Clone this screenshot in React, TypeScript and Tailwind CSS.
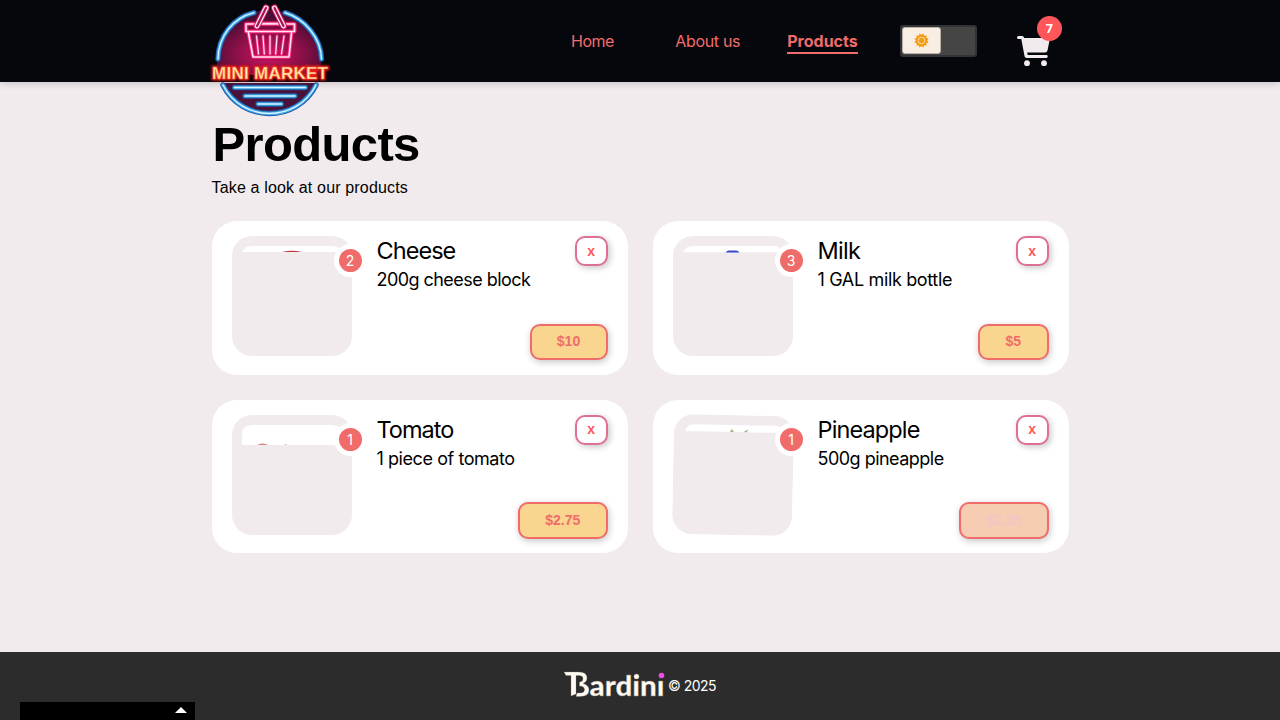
import type { ReactNode } from "react";

type Product = {
  name: string;
  detail: string;
  price: string;
  count: number;
  nameTracking: string;
  detailTracking: string;
  priceWidth: string;
  disabled?: boolean;
  thumb: ReactNode;
};

const products: Product[] = [
  {
    name: "Cheese",
    detail: "200g cheese block",
    price: "$10",
    count: 2,
    nameTracking: "tracking-[-0.950px]",
    detailTracking: "tracking-[-0.550px]",
    priceWidth: "w-[78px]",
    thumb: (
      <>
        <path d="M10 16Q13 10 20 10H100Q107 10 110 16Z" fill="#fff" />
        <path d="M50 16Q60 13.6 70 16Z" fill="#c4373f" />
      </>
    ),
  },
  {
    name: "Milk",
    detail: "1 GAL milk bottle",
    price: "$5",
    count: 3,
    nameTracking: "tracking-[-0.700px]",
    detailTracking: "tracking-[-0.350px]",
    priceWidth: "w-[70.500px]",
    thumb: (
      <>
        <path d="M10 16.3Q13 10 20 10H100Q107 10 110 16.3Z" fill="#fff" />
        <path d="M52.5 16.4Q54 14.6 56 14.6H63Q65 14.6 66.5 16.4Z" fill="#3347c4" />
      </>
    ),
  },
  {
    name: "Tomato",
    detail: "1 piece of tomato",
    price: "$2.75",
    count: 1,
    nameTracking: "tracking-[-1px]",
    detailTracking: "tracking-[-0.430px]",
    priceWidth: "w-[89.500px]",
    thumb: (
      <>
        <path d="M10 30V20Q10 10 20 10H100Q110 10 110 20V30Z" fill="#fff" />
        <path d="M25 30Q30.5 27 36 30Z" fill="#d5807a" />
        <path d="M52 30L53.5 29.3L55 30Z" fill="#d5807a" />
      </>
    ),
  },
  {
    name: "Pineapple",
    detail: "500g pineapple",
    price: "$3.25",
    count: 1,
    nameTracking: "tracking-[-0.880px]",
    detailTracking: "tracking-[-0.520px]",
    priceWidth: "w-[89.500px]",
    disabled: true,
    thumb: (
      <>
        <path d="M11 17Q13 10 20 10H100Q107 10 110 17Z" fill="#fff" />
        <path d="M56 17L57.5 14L60.5 17ZM69 17L74.5 14L73 17Z" fill="#aab792" />
      </>
    ),
  },
];

const slats = "M48 36L50 54M54.500 36L55.800 54M61.500 36V54M68.500 36L67.200 54M75.500 36L73 54";

function Logo() {
  return (
    <svg className="block h-[120px] w-[124px]" viewBox="0 0 124 120">
      <defs>
        <radialGradient id="disc" cx="50%" cy="68%" r="58%">
          <stop offset="0" stopColor="#d01464" />
          <stop offset="0.55" stopColor="#8b1048" />
          <stop offset="1" stopColor="#4a0c34" />
        </radialGradient>
        <filter id="glow" x="-20%" y="-40%" width="140%" height="180%">
          <feGaussianBlur stdDeviation="0.8" />
        </filter>
      </defs>
      <path d="M10 62A52 52 0 0 1 114 62L113 75H10Z" fill="url(#disc)" />
      <path d="M14 83H110A52 52 0 0 1 14 83Z" fill="#491239" />
      <g fill="none" strokeLinecap="round">
        {[
          { c: "#25569f", w: 5.4 },
          { c: "#3ca6eb", w: 3.5 },
          { c: "#d8f5ff", w: 1.3 },
        ].map((s) => (
          <g key={s.c} stroke={s.c} strokeWidth={s.w}>
            <path d="M11 59C11.500 36 26 18 47 12.700M78 12.700C98 19 114 38 114.500 59" />
            <path d="M16 85C35 123 90 123 109 85M27.500 87.500H98.500M38 96H88M51 104H74.500" />
          </g>
        ))}
        {[
          { c: "#a60b49", w: 5 },
          { c: "#f82b80", w: 3.6 },
          { c: "#ffe4ef", w: 1.6 },
        ].map((s) => (
          <g key={s.c} stroke={s.c} strokeWidth={s.w} strokeLinejoin="round">
            <path d="M41.500 33L46 57H82L84.500 33M39 24H87.500V31.500H39ZM56 23.500H71" />
          </g>
        ))}
        <g transform="translate(1.500)">
          <path d={slats} stroke="#f82b80" strokeWidth="2.800" />
          <path d={slats} stroke="#ffe4ef" strokeWidth="1.200" />
          <path d="M48.500 26L57.500 8M75 26L66 8" stroke="#d31461" strokeWidth="7" />
          <path d="M48.500 26L57.500 8M75 26L66 8" stroke="#ffe4ef" strokeWidth="5" />
          <path d="M48.500 26L57.500 8M75 26L66 8" stroke="#a61250" strokeWidth="2.200" />
        </g>
      </g>
      <g fontFamily="Liberation Sans, sans-serif" fontWeight="700" fontSize="17">
        <text aria-hidden="true" x="5" y="79" textLength="116" lengthAdjust="spacing" fill="#ef2118" stroke="#e71a18" strokeWidth="3.200" filter="url(#glow)">MINI MARKET</text>
        <text x="5" y="79" textLength="116" lengthAdjust="spacing" fill="#ffe9ad" stroke="#ff6538" strokeWidth="0.400">MINI MARKET</text>
      </g>
    </svg>
  );
}

function Sun() {
  return (
    <svg className="size-[15px]" viewBox="0 0 30 30" fill="#f39c12">
      <path d="M15 3.500L19 0.800L20.700 5.500L25.500 4.500L24.500 9.500L29.200 11L26.500 15L29.200 19L24.500 20.500L25.500 25.500L20.700 24.500L19 29.200L15 26.500L11 29.200L9.300 24.500L4.500 25.500L5.500 20.500L0.800 19L3.500 15L0.800 11L5.500 9.500L4.500 4.500L9.300 5.500L11 0.800Z" />
      <circle cx="15" cy="15" r="6.500" fill="none" stroke="#f9e2bd" strokeWidth="1.800" />
    </svg>
  );
}

function Cart() {
  return (
    <svg className="block h-[31px] w-[34px]" viewBox="0 0 34 31" fill="#f1ebed">
      <path d="M1.500 0H5Q6.300 0 6.800 1.200L7.200 2H33L30.500 14.500Q29.900 16.500 28 16.500H10.200L10.600 19H29.300A1.400 1.400 0 0 1 29.300 21.900H9.500Q8 21.900 7.600 20.500L4.300 3H1.500A1.500 1.500 0 0 1 1.500 0Z" />
      <circle cx="10" cy="27.200" r="2.900" />
      <circle cx="27" cy="27.200" r="2.900" />
    </svg>
  );
}

function Card({ product: p }: { product: Product }) {
  return (
    <article className="flex h-[153.500px] rounded-[25px] bg-white px-5 pt-[15px]">
      <div className="relative size-[120px] shrink-0">
        <svg className={p.disabled ? "size-[120px] rotate-[1.200deg]" : "size-[120px]"} viewBox="0 0 120 120">
          <rect width="120" height="120" rx="20" fill="#f1ebed" />
          {p.thumb}
        </svg>
        <span className="absolute -right-[15px] top-[8px] flex size-[33px] items-center justify-center rounded-full border-[5px] border-white bg-[#f06c6a] pt-px text-[14px] leading-none text-white">
          {p.count}
        </span>
      </div>
      <div className="ml-[25px] flex min-w-0 flex-1 flex-col">
        <h2 className={`pt-px text-[23.500px] leading-[28px] whitespace-nowrap ${p.nameTracking}`}>{p.name}</h2>
        <p className={`mt-[4px] text-[18px] leading-[22px] whitespace-nowrap ${p.detailTracking}`}>{p.detail}</p>
      </div>
      <div className="flex h-[124px] flex-col items-end justify-between font-['Liberation_Sans',sans-serif] text-[14px] font-bold">
        <button className="h-[30px] w-[32.500px] rounded-[10px] border-2 border-[#df7093] bg-white text-[#ff5759] shadow-[2px_2px_6px_rgba(0,0,0,0.22)]">x</button>
        <button
          className={`h-[36.500px] rounded-[10px] border-2 border-[#f06c6a] shadow-[1px_2px_7px_rgba(0,0,0,0.23)] ${p.priceWidth} ${
            p.disabled ? "bg-[#f6cdb2] text-[#f5c4c7]" : "bg-[#fad590] text-[#f06c6a]"
          }`}
        >
          {p.price}
        </button>
      </div>
    </article>
  );
}

export default function App() {
  return (
    <div className="flex h-[720px] flex-col overflow-hidden bg-[#f1ebed] font-['Inter',sans-serif] text-black">
      <header className="z-10 h-[82px] shrink-0 bg-[#06070d] shadow-[0_1px_8px_rgba(0,0,0,0.2)]">
        <div className="mx-auto flex h-[82px] w-[867px] items-start">
          <div className="w-[364.500px] shrink-0">
            <Logo />
          </div>
          <nav className="flex h-[82px] items-center text-[16px] leading-[20px] text-[#f06c6a]">
            <a className="w-[104.250px] tracking-[-0.500px]">Home</a>
            <a className="w-[112px] tracking-[-0.320px]">About us</a>
            <a className="relative w-[71px] font-bold after:absolute after:top-[21px] after:left-0 after:h-0.5 after:w-[71px] after:bg-[#f06c6a]">Products</a>
          </nav>
          <div className="mt-[25px] ml-[42px] h-[32px] w-[77px] rounded-[3px] border-2 border-[#333335] bg-[#454545]">
            <div className="flex h-[27px] w-[39px] items-center justify-center rounded-[3px] border border-[#b8b0a8] bg-[#f9eee3]">
              <Sun />
            </div>
          </div>
          <div className="relative mt-[36px] ml-[39.500px]">
            <Cart />
            <span className="absolute -top-[20px] left-[20px] flex size-[25px] items-center justify-center rounded-full bg-[#ff5759] pt-px font-['Open_Sans',sans-serif] text-[12.500px] font-bold text-white">7</span>
          </div>
        </div>
      </header>

      <main className="mx-auto w-[857px] flex-1 pt-[33px]">
        <h1 className="pl-px font-['Liberation_Sans',sans-serif] text-[49px] leading-[58px] font-bold tracking-[-0.650px]">Products</h1>
        <p className="mt-[5px] font-['Liberation_Sans',sans-serif] text-[16px] leading-[20px] tracking-[0.160px]">Take a look at our products</p>
        <section className="mt-[23px] grid grid-cols-2 gap-[25px]">
          {products.map((p) => (
            <Card key={p.name} product={p} />
          ))}
        </section>
      </main>

      <footer className="relative flex h-[68px] shrink-0 justify-center gap-[2px] bg-[#2c2c2c] pt-[17px] text-white">
        <svg className="h-[32px] w-[102px] overflow-visible" viewBox="0 0 102 32">
          <g fill="#fffaf4" stroke="#8c806c" strokeWidth="0.300">
            <path d="M0 3H15Q23 3 23 9Q23 12.500 19 14.500Q25 16 25 21Q25 27.500 16 27.500H12L13 24H16Q20.500 24 20.500 20.500Q20.500 17 15.500 17V13Q19 13 19 9.500Q19 6.500 15 6.500H12V25L7 27V6.500H2Z" />
            <text x="25.500" y="27" fontFamily="Lato, sans-serif" fontSize="29" fontWeight="900" textLength="75" lengthAdjust="spacingAndGlyphs">ardını</text>
            <circle cx="72.500" cy="7.500" r="2.600" />
          </g>
          <circle cx="97.500" cy="6.500" r="2.800" fill="#f04be8" />
        </svg>
        <span className="mt-[7px] text-[14px] leading-[20px] tracking-[-0.500px] whitespace-nowrap">© 2025</span>
        <div className="absolute bottom-0 left-5 flex h-[18px] w-[175px] justify-end bg-black pt-[5px] pr-[8px]">
          <svg className="h-[6px] w-[12px]" viewBox="0 0 12 6"><path d="M6 0L12 6H0Z" fill="#fff" /></svg>
        </div>
      </footer>
    </div>
  );
}
